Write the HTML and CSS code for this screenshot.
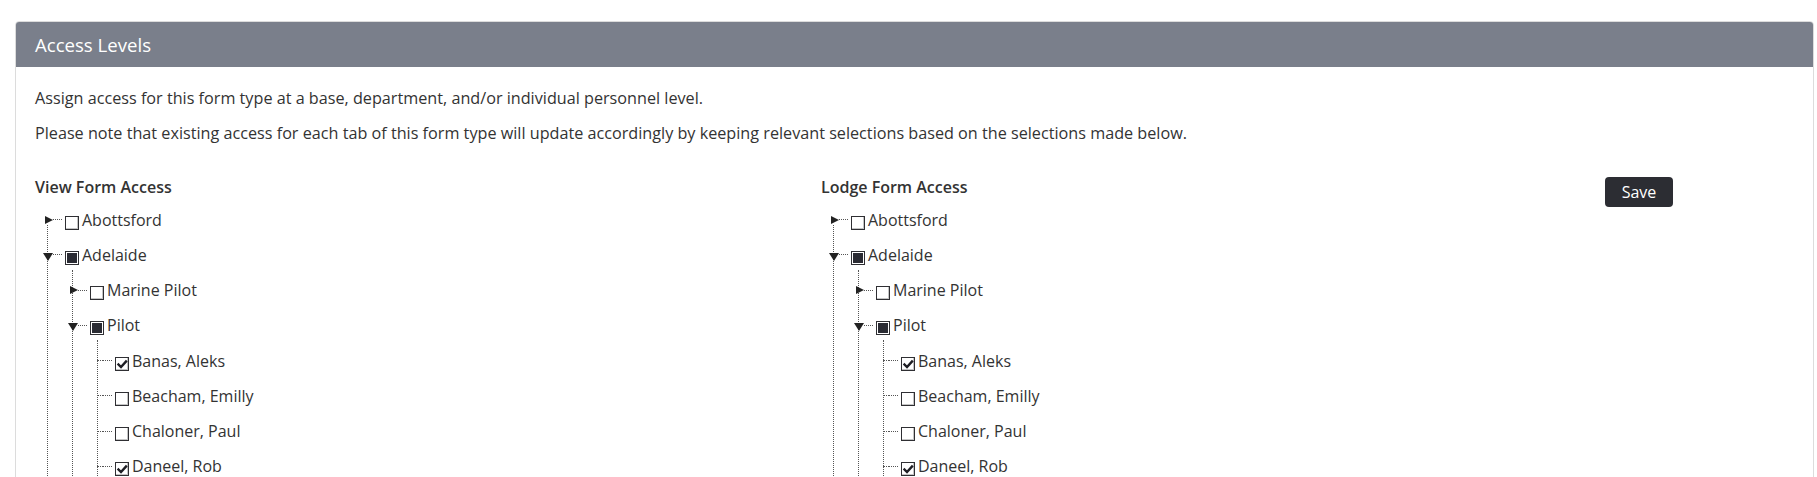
FILE: index.html
```html
<!DOCTYPE html>
<html lang="en">
<head>
<meta charset="utf-8">
<title>Access Levels</title>
<link rel="stylesheet" href="styles.css">
</head>
<body>
<div class="panel">
  <div class="panel-heading">Access Levels</div>
  <div class="panel-body">
    <p>Assign access for this form type at a base, department, and/or individual personnel level.</p>
    <p>Please note that existing access for each tab of this form type will update accordingly by keeping relevant selections based on the selections made below.</p>
    <div class="cols">
      <div class="col col-view">
        <div class="col-title">View Form Access</div>
        <ul class="tree root">
          <li>
            <div class="node"><span class="exp"><span class="tri-right"></span></span><span class="conn"></span><span class="cb"></span><span class="label">Abottsford</span></div>
          </li>
          <li>
            <div class="node"><span class="exp"><span class="tri-down"></span></span><span class="conn"></span><span class="cb partial"></span><span class="label">Adelaide</span></div>
            <ul class="tree children">
              <li>
                <div class="node"><span class="exp"><span class="tri-right"></span></span><span class="conn"></span><span class="cb"></span><span class="label">Marine Pilot</span></div>
              </li>
              <li>
                <div class="node"><span class="exp"><span class="tri-down"></span></span><span class="conn"></span><span class="cb partial"></span><span class="label">Pilot</span></div>
                <ul class="tree children">
                  <li><div class="node"><span class="exp leaf"></span><span class="conn"></span><span class="cb checked"><svg viewBox="0 0 12 12"><path d="M2.5 6.5 L5 9 L10 3.5"/></svg></span><span class="label">Banas, Aleks</span></div></li>
                  <li><div class="node"><span class="exp leaf"></span><span class="conn"></span><span class="cb"></span><span class="label">Beacham, Emilly</span></div></li>
                  <li><div class="node"><span class="exp leaf"></span><span class="conn"></span><span class="cb"></span><span class="label">Chaloner, Paul</span></div></li>
                  <li><div class="node"><span class="exp leaf"></span><span class="conn"></span><span class="cb checked"><svg viewBox="0 0 12 12"><path d="M2.5 6.5 L5 9 L10 3.5"/></svg></span><span class="label">Daneel, Rob</span></div></li>
                </ul>
              </li>
            </ul>
          </li>
        </ul>
      </div>
      <div class="col col-lodge">
        <div class="col-title">Lodge Form Access</div>
        <ul class="tree root">
          <li>
            <div class="node"><span class="exp"><span class="tri-right"></span></span><span class="conn"></span><span class="cb"></span><span class="label">Abottsford</span></div>
          </li>
          <li>
            <div class="node"><span class="exp"><span class="tri-down"></span></span><span class="conn"></span><span class="cb partial"></span><span class="label">Adelaide</span></div>
            <ul class="tree children">
              <li>
                <div class="node"><span class="exp"><span class="tri-right"></span></span><span class="conn"></span><span class="cb"></span><span class="label">Marine Pilot</span></div>
              </li>
              <li>
                <div class="node"><span class="exp"><span class="tri-down"></span></span><span class="conn"></span><span class="cb partial"></span><span class="label">Pilot</span></div>
                <ul class="tree children">
                  <li><div class="node"><span class="exp leaf"></span><span class="conn"></span><span class="cb checked"><svg viewBox="0 0 12 12"><path d="M2.5 6.5 L5 9 L10 3.5"/></svg></span><span class="label">Banas, Aleks</span></div></li>
                  <li><div class="node"><span class="exp leaf"></span><span class="conn"></span><span class="cb"></span><span class="label">Beacham, Emilly</span></div></li>
                  <li><div class="node"><span class="exp leaf"></span><span class="conn"></span><span class="cb"></span><span class="label">Chaloner, Paul</span></div></li>
                  <li><div class="node"><span class="exp leaf"></span><span class="conn"></span><span class="cb checked"><svg viewBox="0 0 12 12"><path d="M2.5 6.5 L5 9 L10 3.5"/></svg></span><span class="label">Daneel, Rob</span></div></li>
                </ul>
              </li>
            </ul>
          </li>
        </ul>
      </div>
      <div class="col col-actions">
        <button class="btn-save" type="button">Save</button>
      </div>
    </div>
  </div>
</div>
</body>
</html>
```

FILE: styles.css
```css
html, body {
  margin: 0;
  padding: 0;
  background: #ffffff;
}

body {
  font-family: "Open Sans", "Noto Sans", sans-serif;
  font-size: 16px;
  line-height: 22px;
  color: #333333;
}

.panel {
  margin: 21px 3px 0 15px;
  border: 1px solid #dcdcdc;
  border-radius: 4px 4px 0 0;
  overflow: hidden;
}

.panel-heading {
  background: #7a7f8b;
  color: #ffffff;
  font-size: 18.6px;
  height: 45px;
  line-height: 45px;
  padding: 0 19px;
}

.panel-body {
  padding: 20px 19px 60px 19px;
}

.panel-body p {
  margin: 0 0 13px 0;
  font-size: 16.2px;
}

.cols {
  display: flex;
  margin-top: 31px;
}

.col-view {
  width: 786px;
  flex: none;
}

.col-lodge {
  width: 784px;
  flex: none;
}

.col-actions {
  flex: 1;
}

.col-title {
  font-weight: 600;
  margin-top: 1px;
  margin-bottom: 4px;
}

.tree {
  list-style: none;
  margin: 0;
  padding: 0;
  position: relative;
}

.tree.root::before {
  content: "";
  position: absolute;
  left: 12px;
  top: 23px;
  bottom: 0;
  border-left: 1px dotted #555;
}

.tree.children {
  padding-left: 25px;
}

.tree.children::before {
  content: "";
  position: absolute;
  left: 37px;
  top: -3px;
  bottom: 0;
  border-left: 1px dotted #555;
}

.node {
  display: flex;
  align-items: center;
  height: 35.25px;
  position: relative;
}

.exp {
  width: 18px;
  height: 100%;
  box-sizing: border-box;
  padding-left: 8px;
  display: flex;
  align-items: center;
  justify-content: center;
  flex: none;
  position: relative;
  z-index: 1;
}

.exp.leaf {
  justify-content: flex-end;
  padding-left: 12px;
}

.exp.leaf::after {
  content: "";
  display: block;
  width: 6px;
  border-top: 1px dotted #555;
}

.tri-right {
  width: 0;
  height: 0;
  border-left: 8px solid #222;
  border-top: 4.5px solid transparent;
  border-bottom: 4.5px solid transparent;
  margin-left: 2px;
}

.tri-down {
  width: 0;
  height: 0;
  border-top: 8px solid #222;
  border-left: 5px solid transparent;
  border-right: 5px solid transparent;
  margin-top: 4px;
}

.conn {
  width: 9px;
  border-top: 1px dotted #555;
  margin-right: 3px;
  flex: none;
}

.cb {
  width: 14px;
  height: 14px;
  box-sizing: border-box;
  border: 1px solid #2f2f33;
  background: #ffffff;
  box-shadow: inset -1px -1px 0 #c4c4c4;
  margin-top: 6px;
  flex: none;
  display: flex;
  align-items: center;
  justify-content: center;
}

.cb.partial {
  box-shadow: none;
}

.cb.partial::after {
  content: "";
  width: 10px;
  height: 10px;
  background: #2a2b33;
}

.cb svg {
  width: 12px;
  height: 12px;
  display: block;
}

.cb svg path {
  fill: none;
  stroke: #1e1e24;
  stroke-width: 2.4;
  stroke-linecap: square;
}

.label {
  margin-left: 3px;
  white-space: nowrap;
}

.btn-save {
  margin-top: 2px;
  width: 68px;
  height: 30px;
  background: #2c2d33;
  color: #ffffff;
  border: none;
  border-radius: 4px;
  font-family: "Open Sans", "Noto Sans", sans-serif;
  font-size: 16px;
  line-height: 30px;
  padding: 0;
  cursor: pointer;
}
```
